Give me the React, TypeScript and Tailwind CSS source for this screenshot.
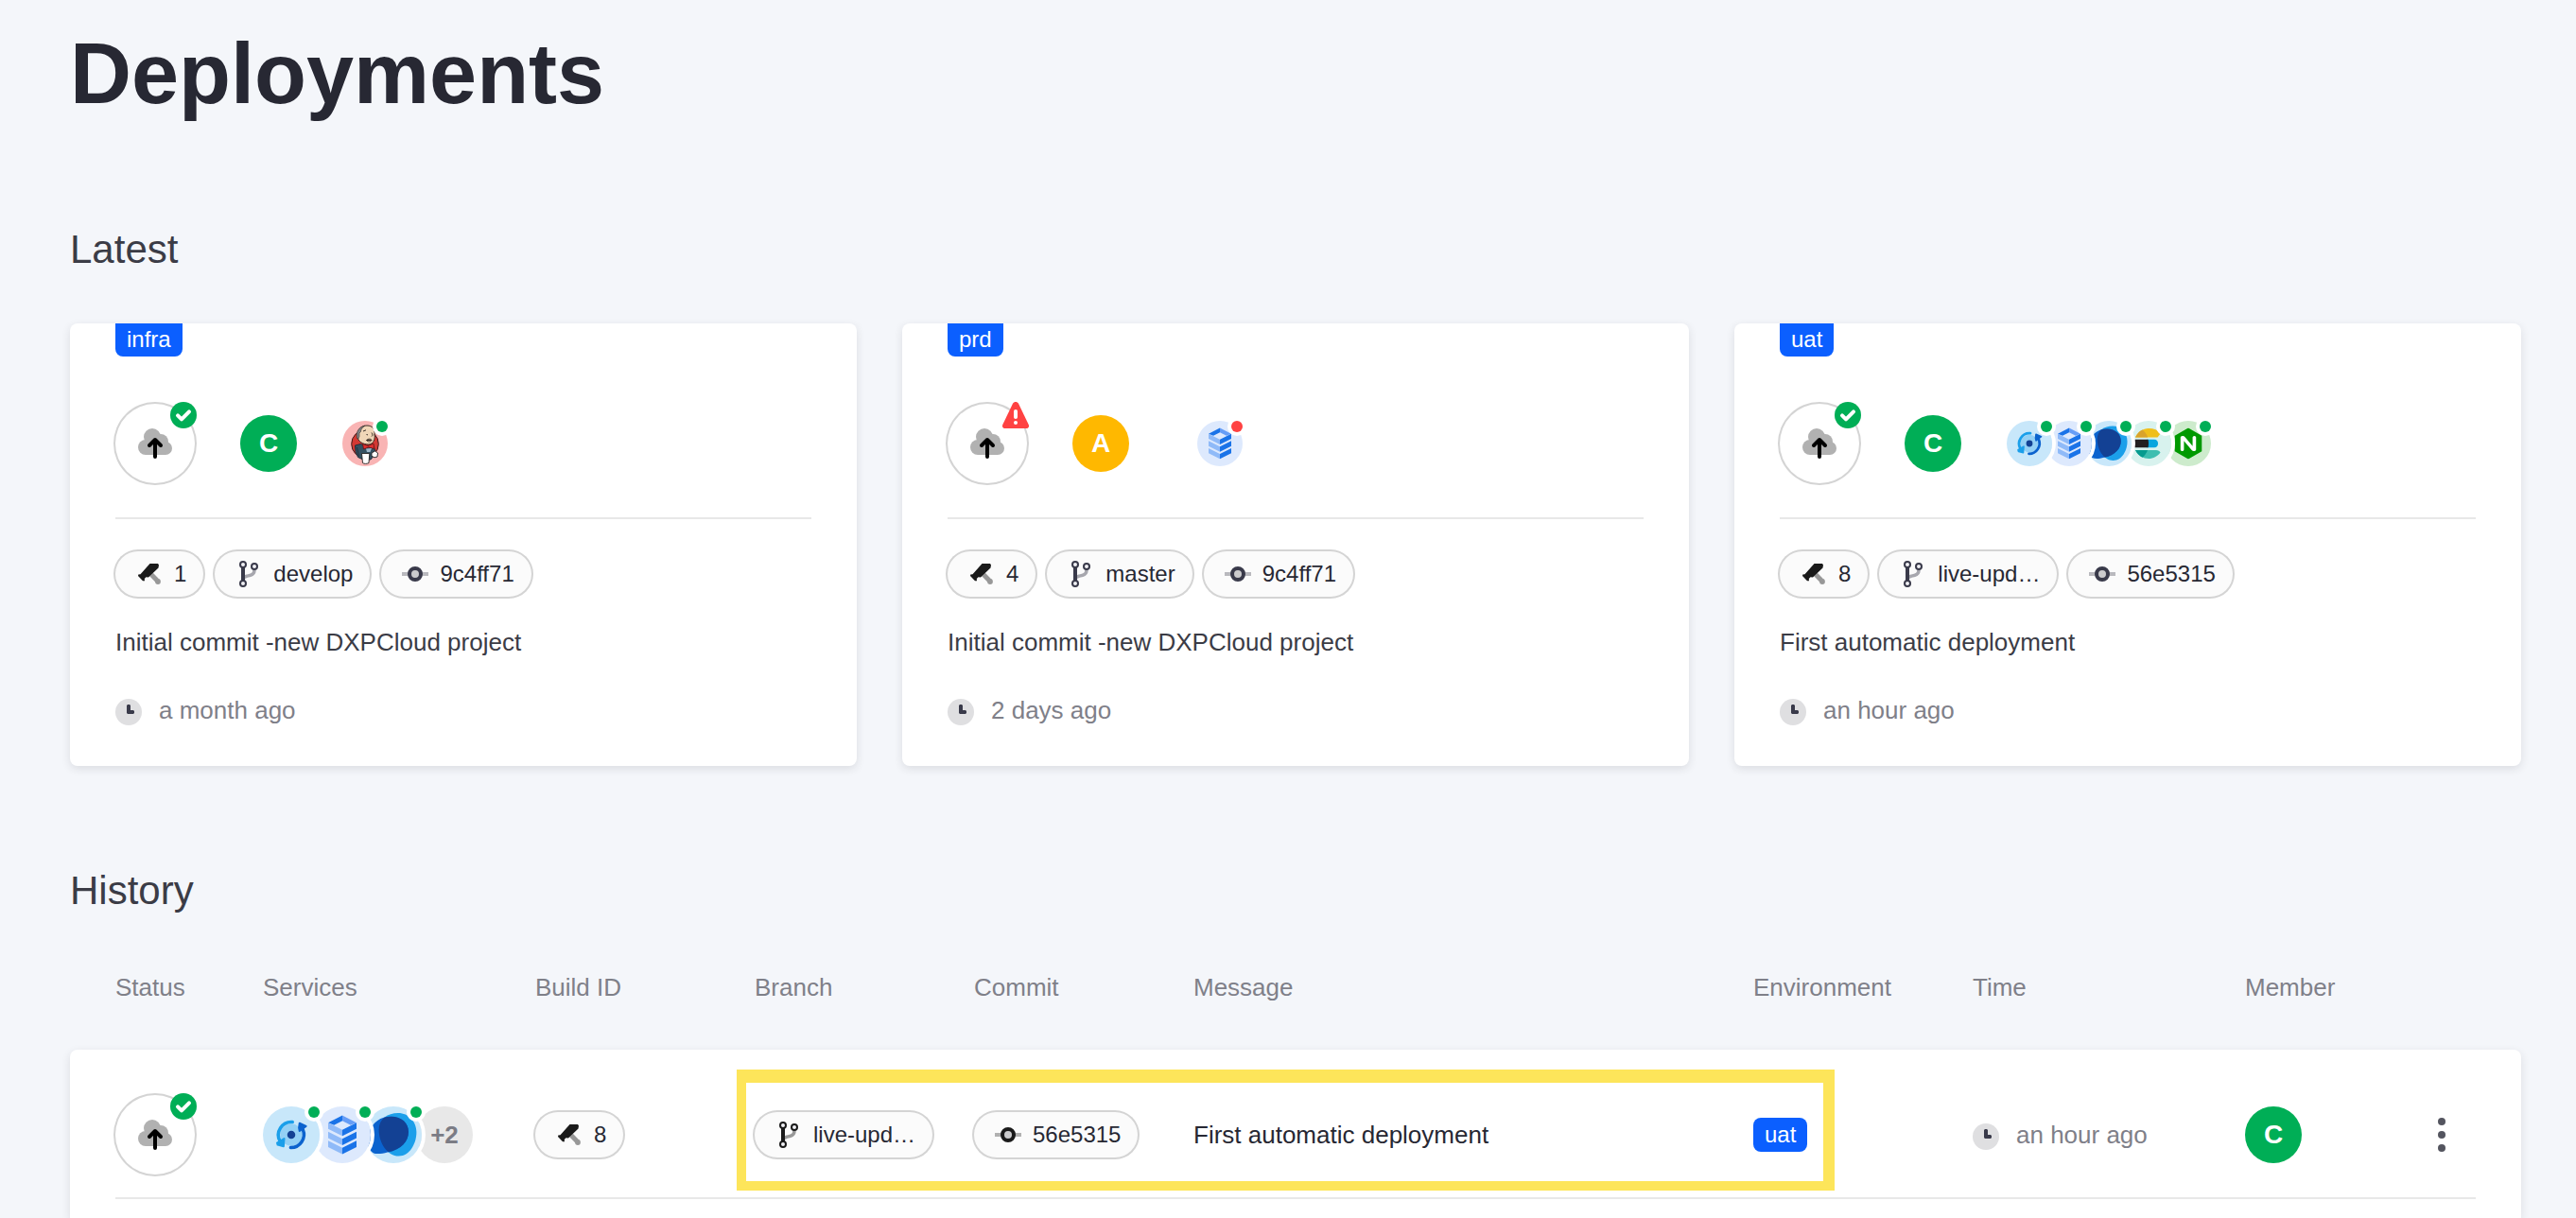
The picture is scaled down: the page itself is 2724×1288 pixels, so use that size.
import { useId } from "react";
import type { ReactNode } from "react";
import { SiNginx } from "react-icons/si";

type ServiceName = "jenkins" | "database" | "backup" | "liferay" | "search" | "webserver";
type Health = "ok" | "error";

interface Deployment {
  env: string;
  health: Health;
  member: string;
  services: ServiceName[];
  build: string;
  branch: string;
  commit: string;
  message: string;
  time: string;
}

const latest: Deployment[] = [
  {
    env: "infra",
    health: "ok",
    member: "C",
    services: ["jenkins"],
    build: "1",
    branch: "develop",
    commit: "9c4ff71",
    message: "Initial commit -new DXPCloud project",
    time: "a month ago",
  },
  {
    env: "prd",
    health: "error",
    member: "A",
    services: ["database"],
    build: "4",
    branch: "master",
    commit: "9c4ff71",
    message: "Initial commit -new DXPCloud project",
    time: "2 days ago",
  },
  {
    env: "uat",
    health: "ok",
    member: "C",
    services: ["backup", "database", "liferay", "search", "webserver"],
    build: "8",
    branch: "live-upd…",
    commit: "56e5315",
    message: "First automatic deployment",
    time: "an hour ago",
  },
];

const columns = ["Status", "Services", "Build ID", "Branch", "Commit", "Message", "Environment", "Time", "Member"];

const gridColumns = "grid grid-cols-[156fr_288fr_232fr_232fr_232fr_592fr_232fr_288fr_244fr]";

const stackOrder = ["z-50", "z-40", "z-30", "z-20", "z-10"];

function CloudUpload() {
  return (
    <svg viewBox="0 0 36 32" className="h-8 w-9" aria-hidden="true">
      <g fill="#b1b1b1">
        <circle cx="8" cy="20" r="8" />
        <circle cx="15" cy="9" r="9" />
        <circle cx="24" cy="14" r="8" />
        <circle cx="29" cy="21" r="7" />
        <rect x="8" y="12" width="21" height="16" />
      </g>
      <path d="M18 12.5V30M12 18l6-6 6 6" fill="none" stroke="#000" strokeWidth="4" strokeLinecap="round" strokeLinejoin="round" />
    </svg>
  );
}

function HealthBadge({ health }: { health: Health }) {
  return (
    <svg
      viewBox="0 0 28 28"
      className="absolute -top-0.5 -right-0.5 size-7"
      role="img"
      aria-label={health === "ok" ? "Succeeded" : "Failed"}
    >
      {health === "ok" ? (
        <>
          <circle cx="14" cy="14" r="14" fill="#00ae56" />
          <path d="M8 14.3l4 4 8-8" fill="none" stroke="#fff" strokeWidth="4" strokeLinecap="round" strokeLinejoin="round" />
        </>
      ) : (
        <>
          <path d="M11 1.8C12.3-.6 15.7-.6 17 1.8L27.7 24C28.7 26.1 27.4 28 25.1 28H2.9C.6 28-.7 26.1.3 24Z" fill="#ff4242" />
          <path d="M14 10v6" stroke="#fff" strokeWidth="4" strokeLinecap="round" />
          <circle cx="14" cy="22" r="2" fill="#fff" />
        </>
      )}
    </svg>
  );
}

function StatusCircle({ health }: { health: Health }) {
  return (
    <span className="relative flex size-21 shrink-0 items-center justify-center rounded-full bg-white ring-2 ring-[#d4d4d4]">
      <CloudUpload />
      <HealthBadge health={health} />
    </span>
  );
}

function Avatar({ letter }: { letter: string }) {
  return (
    <span
      className={`flex size-15 shrink-0 items-center justify-center rounded-full text-[28px] leading-8 font-bold text-white ${
        letter === "A" ? "bg-[#ffb800]" : "bg-[#00ae56]"
      }`}
    >
      {letter}
    </span>
  );
}

function JenkinsArt() {
  return (
    <>
      <circle cx="24" cy="24" r="24" fill="#f9b4b4" />
      <ellipse cx="24" cy="24.5" rx="14.3" ry="14.5" fill="#d33833" stroke="#3b1d1d" strokeWidth="1" />
      <path d="M13.5 26l6-1.500 5 2.500 8-1 2.500 6-3 6.500-2 2.500h-8l-5.500-2.500-2.500-6Z" fill="#335061" stroke="#1d2b35" strokeWidth=".9" />
      <path d="M16 16C16 9 20 5 26 5 32 5 34.500 9 34 14 35 19 33 24.500 28 25 22 25 16 22 16 16Z" fill="#f0d6b7" stroke="#3a2f28" strokeWidth="1" />
      <path d="M15.500 18.500C14.200 12 17 6.500 24 5.200 21.500 7 19.500 8.500 19.500 11.500L18 13v3.500l-1 2.500Z" fill="#7d8286" stroke="#3a2f28" strokeWidth=".6" />
      <path d="M22 11l3-1.200M31 12.500c1 2 1.500 3 0 4M25.500 14.500l1.500.4M25.500 20.500c2-2 5-1.500 5.500 0-1 2-4 2-5.500 0ZM25.500 20.500h5" fill="none" stroke="#3a2f28" strokeWidth="1" />
      <path d="M21.500 24.500l5.500 2 6-2.500.8 5.500-6-1.500-5.300 2Z" fill="#e02f2f" stroke="#5e1414" strokeWidth=".8" />
      <path d="M25 29.500l6-.5-1.500 4h-3.500Z" fill="#9cb6c9" />
      <path d="M20.500 34.500h8.300l-.8 10c-2 1.200-5 1.200-6.500 0Z" fill="#fff" stroke="#222" strokeWidth=".9" />
      <path d="M31 34l3.500-2 3 2-.5 4-3 .8-3-1.500Z" fill="#fff" stroke="#222" strokeWidth=".9" />
      <path d="M15.500 28l2 9.500" stroke="#1d2b35" strokeWidth=".8" />
    </>
  );
}

function DatabaseArt() {
  return (
    <>
      <circle cx="24" cy="24" r="24" fill="#dde9fd" />
      <path d="M24 7.500v4.700L17 15.700l-5-2Z" fill="#1a73e8" />
      <path d="M24 7.500v4.700l7 3.500 5-2Z" fill="#669df6" />
      <path d="M12 13.700l12 6v5.300l-12-6Z M12 21.300l12 6v5.400l-12-6Z M12 28.900l12 6v5.400l-12-6Z" fill="#8fbaf8" />
      <path d="M36 13.700l-12 6v5.300l12-6Z M36 21.300l-12 6v5.400l12-6Z M36 28.900l-12 6v5.400l12-6Z" fill="#1a73e8" />
    </>
  );
}

function BackupArt() {
  return (
    <>
      <circle cx="24" cy="24" r="24" fill="#c8e7fa" />
      <circle cx="24" cy="24" r="9.300" fill="#93d0f5" />
      <path d="M25 13.200A11 11 0 0 0 14.500 29.500" fill="none" stroke="#1b9fea" strokeWidth="2.800" strokeLinecap="round" />
      <path d="M12 30.800L18 27.200 17.500 33.800 12.500 32.500Z" fill="#1b9fea" stroke="#1b9fea" strokeWidth="1.600" strokeLinejoin="round" />
      <path d="M23.500 34.800A11 11 0 0 0 33.800 19.500" fill="none" stroke="#0b63ce" strokeWidth="2.800" strokeLinecap="round" />
      <path d="M31 14.200L36.500 16.700 31 20.800 30.500 18Z" fill="#0b63ce" stroke="#0b63ce" strokeWidth="1.600" strokeLinejoin="round" />
      <circle cx="24" cy="24" r="3.400" fill="#134194" />
    </>
  );
}

function LiferayArt() {
  const clip = useId();
  const back = "M11.700 19.500C11.700 10.500 19 5.600 28 5.600S43.500 13 43.500 22 38 42 28.500 42 11.700 31 11.700 19.500Z";
  const front = "M3 22C7 13 13 8.500 22 8.500S36.800 14 36.800 21.500 31 36.500 19 38.800C14 40.200 9.500 40.500 7 39.300 4 38 2 33 2 28Z";
  return (
    <>
      <clipPath id={clip}>
        <path d={back} />
      </clipPath>
      <circle cx="24" cy="24" r="24" fill="#c8e7fa" />
      <path d={back} fill="#1b9fea" />
      <path d={front} fill="#0b63ce" />
      <path d={front} fill="#134194" clipPath={`url(#${clip})`} />
    </>
  );
}

function SearchArt() {
  return (
    <>
      <circle cx="24" cy="24" r="24" fill="#d8f2ee" />
      <path d="M10 17.500C13 11.500 18 8 24 8c5.500 0 10 1.800 13 5l-3.500 4.500Z" fill="#f0bf1a" />
      <path d="M10 17.500C12.500 12.500 15 10.500 17.500 9.500 20 11.500 22 14 23.200 17.500Z" fill="#d9a32b" />
      <path d="M22 19.700h8c5.400 0 5.400 8.500 0 8.500h-8Z" fill="#07a5de" />
      <path d="M9 19.700h14.500c.7 2.800.7 5.700 0 8.500H9Z" fill="#231f20" />
      <path d="M10 31h22c2.200 0 3.800 1 4.500 2.500C33.500 37.500 29 40 24 40S13 37 10 31Z" fill="#3ebeb0" />
      <path d="M10 31h13c-1.200 3.200-3 5.800-5.500 7.800C14.500 37.200 12 35 10 31Z" fill="#079b8f" />
    </>
  );
}

function ServiceArt({ name }: { name: ServiceName }) {
  switch (name) {
    case "jenkins":
      return <JenkinsArt />;
    case "database":
      return <DatabaseArt />;
    case "backup":
      return <BackupArt />;
    case "liferay":
      return <LiferayArt />;
    case "search":
      return <SearchArt />;
    default:
      return (
        <>
          <circle cx="24" cy="24" r="24" fill="#cdebcc" />
          <rect x="15" y="14" width="18" height="20" fill="#fff" />
          <SiNginx x="7.500" y="7.500" size={33} color="#009900" />
        </>
      );
  }
}

function Service({ name, health, order, size }: { name: ServiceName; health: Health; order: number; size: "md" | "lg" }) {
  return (
    <li className={`relative rounded-full ring-4 ring-white ${stackOrder[order]} ${size === "md" ? "size-12" : "size-15"}`}>
      <svg viewBox="0 0 48 48" className="size-full" role="img" aria-label={name}>
        <ServiceArt name={name} />
      </svg>
      <span
        className={`absolute top-0 right-0 size-3 rounded-full ring-4 ring-white ${
          health === "ok" ? "bg-[#00ae56]" : "bg-[#ff4242]"
        }`}
      />
    </li>
  );
}

function HammerIcon({ dark }: { dark: string }) {
  return (
    <svg viewBox="0 0 28 28" className="size-7 shrink-0" aria-hidden="true">
      <path d="M16 14.500L23 21.800" stroke="#989898" strokeWidth="5" />
      <circle cx="23" cy="22" r="2.900" fill="#989898" />
      <path d="M14.500 3H23l1 1.500L23.500 7.500 13 17.500l-2.500-.3L8.800 19l.2 2.200H7L2 16l.3-1.500 2.200-.2Z" fill={dark} />
    </svg>
  );
}

function BranchIcon({ dark, mid }: { dark: string; mid: string }) {
  return (
    <svg viewBox="0 0 28 28" className="size-7 shrink-0" aria-hidden="true">
      <path d="M20 9.500C20 15 16 15.500 12 16.200 9.500 16.800 8 17.500 8 20" fill="none" stroke={mid} strokeWidth="3.500" />
      <path d="M8 6v15" stroke={dark} strokeWidth="4" />
      <g fill="#f1f1f5" stroke={dark} strokeWidth="2">
        <circle cx="8" cy="4" r="3" />
        <circle cx="8" cy="24" r="3" />
        <circle cx="20" cy="6" r="3" />
      </g>
    </svg>
  );
}

function CommitIcon({ dark, mid }: { dark: string; mid: string }) {
  return (
    <svg viewBox="0 0 28 28" className="size-7 shrink-0" aria-hidden="true">
      <path d="M0 14h28" stroke={mid} strokeWidth="4" />
      <circle cx="14" cy="14" r="6" fill="#cbcbcd" stroke={dark} strokeWidth="4" />
    </svg>
  );
}

function ClockIcon() {
  return (
    <svg viewBox="0 0 28 28" className="mt-1 size-7 shrink-0" aria-hidden="true">
      <circle cx="14" cy="14" r="14" fill="#dfdfe1" />
      <path d="M13 6h2l1 1v5h3l1 1v2l-1 1h-6l-1-1V7Z" fill="#393a4a" />
    </svg>
  );
}

function Pill({ icon, children }: { icon: ReactNode; children: ReactNode }) {
  return (
    <span className="inline-flex h-12 items-center gap-3 rounded-full bg-[#fbfbfb] pr-[18px] pl-[22px] text-2xl whitespace-nowrap text-[#272833] ring-2 ring-[#d4d4d4]">
      {icon}
      {children}
    </span>
  );
}

function TimeAgo({ children }: { children: ReactNode }) {
  return (
    <span className="flex items-center gap-[18px] whitespace-nowrap text-[#7f8089]">
      <ClockIcon />
      <time>{children}</time>
    </span>
  );
}

function DeploymentCard({ item }: { item: Deployment }) {
  return (
    <article className="flex flex-col items-start rounded-lg bg-white px-12 pb-[41px] shadow-[0_3px_10px_rgba(39,40,51,0.12)]">
      <span className="h-[35px] rounded-b-lg bg-[#0b5fff] px-3 text-2xl leading-[34px] text-white">{item.env}</span>
      <div className="mt-[50px] flex items-center gap-12">
        <StatusCircle health={item.health} />
        <Avatar letter={item.member} />
        <ul className={`isolate flex -space-x-1.5 ${item.health === "error" ? "ml-6" : ""}`}>
          {item.services.map((name, i) => (
            <Service key={name} name={name} health={item.health} order={i} size="md" />
          ))}
        </ul>
      </div>
      <hr className="mt-9 w-full border-t-2 border-[#e8e8e8]" />
      <div className="mt-[34px] flex gap-3">
        <Pill icon={<HammerIcon dark="#1a1a1a" />}>{item.build}</Pill>
        <Pill icon={<BranchIcon dark="#393a4a" mid="#a7a7ae" />}>{item.branch}</Pill>
        <Pill icon={<CommitIcon dark="#393a4a" mid="#b9b9be" />}>{item.commit}</Pill>
      </div>
      <p className="mt-[30px] mb-9">{item.message}</p>
      <TimeAgo>{item.time}</TimeAgo>
    </article>
  );
}

function HistoryRow({ item }: { item: Deployment }) {
  return (
    <tr
      className={`${gridColumns} relative items-center border-b-2 border-[#e8e8e8] pt-12 pb-6 before:pointer-events-none before:absolute before:top-[21px] before:right-[146px] before:-left-[19px] before:col-start-4 before:col-end-8 before:h-32 before:border-t-[14px] before:border-r-12 before:border-b-10 before:border-l-10 before:border-[#fde55a]`}
    >
      <td>
        <StatusCircle health={item.health} />
      </td>
      <td>
        <ul className="isolate flex -space-x-1.5">
          {item.services.slice(0, 3).map((name, i) => (
            <Service key={name} name={name} health={item.health} order={i} size="lg" />
          ))}
          <li className="flex size-15 items-center justify-center rounded-full bg-[#e8e8e8] font-bold text-[#7b7c85]">+2</li>
        </ul>
      </td>
      <td className="flex">
        <Pill icon={<HammerIcon dark="#1a1a1a" />}>{item.build}</Pill>
      </td>
      <td className="flex">
        <Pill icon={<BranchIcon dark="#1a1a1a" mid="#999999" />}>{item.branch}</Pill>
      </td>
      <td className="flex">
        <Pill icon={<CommitIcon dark="#1a1a1a" mid="#b1b1b1" />}>{item.commit}</Pill>
      </td>
      <td className="text-[#272833]">{item.message}</td>
      <td className="flex">
        <span className="h-9 rounded-lg bg-[#0b5fff] px-3 text-2xl leading-9 text-white">{item.env}</span>
      </td>
      <td>
        <TimeAgo>{item.time}</TimeAgo>
      </td>
      <td className="flex items-center justify-between">
        <Avatar letter={item.member} />
        <button type="button" aria-label="More actions" className="flex w-18 flex-col items-center gap-1.5 py-2">
          <span className="size-2 rounded-full bg-[#54555f]" />
          <span className="size-2 rounded-full bg-[#54555f]" />
          <span className="size-2 rounded-full bg-[#54555f]" />
        </button>
      </td>
    </tr>
  );
}

export default function App() {
  return (
    <main className="flex min-h-screen flex-col bg-[#f4f6fa] pt-6 pr-[58px] pl-[74px] font-['Liberation_Sans',Arial,sans-serif] text-[26px] leading-9 text-[#3b3c46]">
      <h1 className="text-[90px] leading-[108px] font-bold text-[#272833]">Deployments</h1>

      <h2 className="mt-[108px] text-[42px] leading-12">Latest</h2>
      <section className="mt-[54px] grid grid-cols-3 gap-12" aria-label="Latest deployments">
        {latest.map((item) => (
          <DeploymentCard key={item.env} item={item} />
        ))}
      </section>

      <h2 className="mt-[108px] text-[42px] leading-12">History</h2>
      <table className="mt-15 flex grow flex-col">
        <thead className="block px-12 pb-12">
          <tr className={gridColumns}>
            {columns.map((label) => (
              <th key={label} scope="col" className="text-left font-normal whitespace-nowrap text-[#7f8089]">
                {label}
              </th>
            ))}
          </tr>
        </thead>
        <tbody className="block grow rounded-t-lg bg-white px-12 shadow-[0_3px_10px_rgba(39,40,51,0.12)]">
          <HistoryRow item={latest[2]} />
        </tbody>
      </table>
    </main>
  );
}
